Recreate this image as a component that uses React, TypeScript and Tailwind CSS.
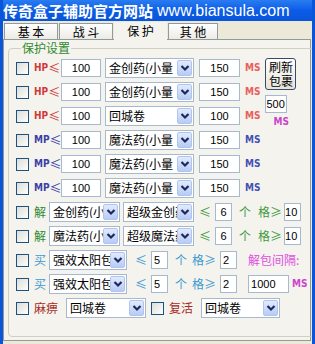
import React from "react";

const cjk = { fontFamily: '"Noto Sans CJK SC", "Noto Sans", sans-serif' };

const Check = () => (
  <span className="inline-block w-[13px] h-[13px] shrink-0 border border-[#1c5180] bg-gradient-to-br from-[#dcdcd7] to-white" />
);

const Chevron = () => (
  <svg width="10" height="8" viewBox="0 0 10 8">
    <path d="M1.5 2 L5 5.5 L8.5 2" fill="none" stroke="#1a2a5a" strokeWidth="2.2" />
  </svg>
);

const Box = ({ value, w, cls = "" }: { value: string; w: string; cls?: string }) => (
  <div
    className={`h-[18px] ${w} shrink-0 bg-white border border-[#a5b9d0] flex items-center justify-center text-[11px] text-black ${cls}`}
    style={{ fontFamily: '"Liberation Sans", Arial, sans-serif' }}
  >
    {value}
  </div>
);

const Select = ({ text, w }: { text: string; w: string }) => (
  <div className={`h-[20px] ${w} shrink-0 bg-white border border-[#a5b9d0] flex items-center`}>
    <span className="flex-1 overflow-hidden whitespace-nowrap pl-[3px] text-[12px] text-black leading-none" style={cjk}>
      {text}
    </span>
    <span className="w-[15px] h-[16px] mr-[1px] shrink-0 rounded-[2px] border border-[#b2c4ec] bg-gradient-to-b from-[#e2eafe] to-[#b8cbf6] flex items-center justify-center">
      <Chevron />
    </span>
  </div>
);

const Lbl = ({ children, cls }: { children: React.ReactNode; cls: string }) => (
  <span className={`shrink-0 text-[12px] leading-none whitespace-nowrap ${cls}`} style={cjk}>
    {children}
  </span>
);

const Mini = ({ children, cls }: { children: React.ReactNode; cls: string }) => (
  <span
    className={`shrink-0 text-[10px] font-bold leading-none ${cls}`}
    style={{ fontFamily: '"DejaVu Sans Condensed", "Liberation Sans Narrow", sans-serif' }}
  >
    {children}
  </span>
);

const VitalRow = ({ kind, item }: { kind: "HP" | "MP"; item: string }) => {
  const c = kind === "HP" ? "text-[#d03a3a]" : "text-[#3a3fa8]";
  const ms = kind === "HP" ? "text-[#e8605a]" : "text-[#4450b4]";
  return (
    <div className="h-[24px] flex items-center">
      <Check />
      <span className={`ml-[5px] w-[24px] flex items-center ${c}`}>
        <Mini cls={c}>{kind}</Mini>
        <span className="text-[12px] leading-none" style={cjk}>≤</span>
      </span>
      <Box value="100" w="w-[40px]" cls="ml-[3px]" />
      <div className="ml-[4px]">
        <Select text={item} w="w-[89px]" />
      </div>
      <Box value={item === "回城卷" ? "100" : "150"} w="w-[41px]" cls="ml-[5px]" />
      <Mini cls={`ml-[5px] ${ms}`}>MS</Mini>
    </div>
  );
};

export default function App() {
  return (
    <div className="w-[315px] h-[344px] bg-[#ece9d8] border-l-[3px] border-r-[3px] border-[#0b55d8] overflow-hidden">
      {/* title bar */}
      <div className="h-[21px] -mx-[3px] bg-gradient-to-b from-[#2a7cf0] via-[#0a5ce8] to-[#0a55d8] flex items-center pl-[3px] whitespace-nowrap text-white">
        <span className="text-[15px] font-bold leading-none" style={cjk}>传奇盒子辅助官方网站</span>
        <span className="ml-[4px] text-[16px] leading-none" style={{ fontFamily: '"Liberation Sans", Arial, sans-serif' }}>
          www.biansula.com
        </span>
      </div>

      {/* tabs */}
      <div className="h-[17px] flex items-end pl-[1px] mt-[1px]">
        {["基 本", "战 斗"].map((t) => (
          <div
            key={t}
            className="h-[16px] w-[54px] mr-[1px] border border-b-0 border-[#919b9c] bg-gradient-to-b from-white to-[#ecebe6] flex items-center justify-center text-[12px] leading-none"
            style={cjk}
          >
            {t}
          </div>
        ))}
        <div className="h-[18px] w-[53px] -mb-[1px] bg-[#f4f3ee] flex items-center justify-center text-[12px] leading-none relative z-10" style={cjk}>
          保 护
        </div>
        <div
          className="h-[16px] w-[50px] ml-[1px] border border-b-0 border-[#919b9c] bg-gradient-to-b from-white to-[#ecebe6] flex items-center justify-center text-[12px] leading-none"
          style={cjk}
        >
          其 他
        </div>
      </div>

      {/* tab panel */}
      <div className="h-[302px] mr-[1px] border border-[#919b9c] bg-[#f4f3ee] px-[4px] pt-[2px]">
        <fieldset className="h-[295px] border border-[#d0d0bf] rounded-[4px] px-[7px]">
          <legend className="ml-[5px] px-[1px] text-[12px] leading-none text-[#2f8a2f]" style={cjk}>
            保护设置
          </legend>

          <div className="flex mt-[2px]">
            <div className="flex flex-col">
              <VitalRow kind="HP" item="金创药(小量" />
              <VitalRow kind="HP" item="金创药(小量" />
              <VitalRow kind="HP" item="回城卷" />
              <VitalRow kind="MP" item="魔法药(小量" />
              <VitalRow kind="MP" item="魔法药(小量" />
              <VitalRow kind="MP" item="魔法药(小量" />
            </div>
            <div className="ml-[5px] flex flex-col items-start pt-[2px]">
              <button
                className="w-[31px] h-[32px] border border-[#3c4a6a] rounded-[3px] bg-gradient-to-b from-white to-[#e4e3dc] flex flex-col items-center justify-center text-[12px] leading-[14px] text-black"
                style={cjk}
              >
                <span>刷新</span>
                <span>包裹</span>
              </button>
              <Box value="500" w="w-[22px]" cls="mt-[5px] !justify-start" />
              <Mini cls="mt-[4px] ml-[8px] text-[#cc44cc]">MS</Mini>
            </div>
          </div>

          {[
            ["金创药(小量", "超级金创药"],
            ["魔法药(小量", "超级魔法药"],
          ].map(([a, b]) => (
            <div key={a} className="h-[24px] flex items-center">
              <Check />
              <Lbl cls="ml-[5px] w-[11px] text-[#2f8a2f]">解</Lbl>
              <div className="ml-[4px]">
                <Select text={a} w="w-[71px]" />
              </div>
              <div className="ml-[3px]">
                <Select text={b} w="w-[71px]" />
              </div>
              <Lbl cls="ml-[5px] text-[#3d9a3d]">≤</Lbl>
              <Box value="6" w="w-[17px]" cls="ml-[4px]" />
              <Lbl cls="ml-[7px] text-[#3d9a3d]">个</Lbl>
              <Lbl cls="ml-[7px] text-[#3d9a3d]">格≥</Lbl>
              <Box value="10" w="w-[17px]" cls="ml-[2px] !justify-start" />
            </div>
          ))}

          {[0, 1].map((i) => (
            <div key={i} className="h-[24px] flex items-center">
              <Check />
              <Lbl cls="ml-[5px] w-[11px] text-[#3a9ad0]">买</Lbl>
              <div className="ml-[4px]">
                <Select text="强效太阳包" w="w-[78px]" />
              </div>
              <Lbl cls="ml-[8px] text-[#3a9ad0]">≤</Lbl>
              <Box value="5" w="w-[17px]" cls="ml-[4px] !justify-start pl-[2px]" />
              <Lbl cls="ml-[7px] text-[#3a9ad0]">个</Lbl>
              <Lbl cls="ml-[5px] text-[#3a9ad0]">格≥</Lbl>
              <Box value="2" w="w-[17px]" cls="ml-[4px] !justify-start pl-[2px]" />
              {i === 0 ? (
                <Lbl cls="ml-[11px] text-[#e04ee0]">解包间隔:</Lbl>
              ) : (
                <>
                  <Box value="1000" w="w-[41px]" cls="ml-[11px] !justify-start pl-[2px]" />
                  <Mini cls="ml-[3px] text-[#cc44cc]">MS</Mini>
                </>
              )}
            </div>
          ))}

          <div className="h-[24px] flex items-center">
            <Check />
            <Lbl cls="ml-[5px] text-[#a82a1e]">麻痹</Lbl>
            <div className="ml-[8px]">
              <Select text="回城卷" w="w-[80px]" />
            </div>
            <div className="ml-[5px] flex items-center">
              <Check />
            </div>
            <Lbl cls="ml-[5px] text-[#a82a1e]">复活</Lbl>
            <div className="ml-[8px]">
              <Select text="回城卷" w="w-[79px]" />
            </div>
          </div>
        </fieldset>
      </div>
    </div>
  );
}
